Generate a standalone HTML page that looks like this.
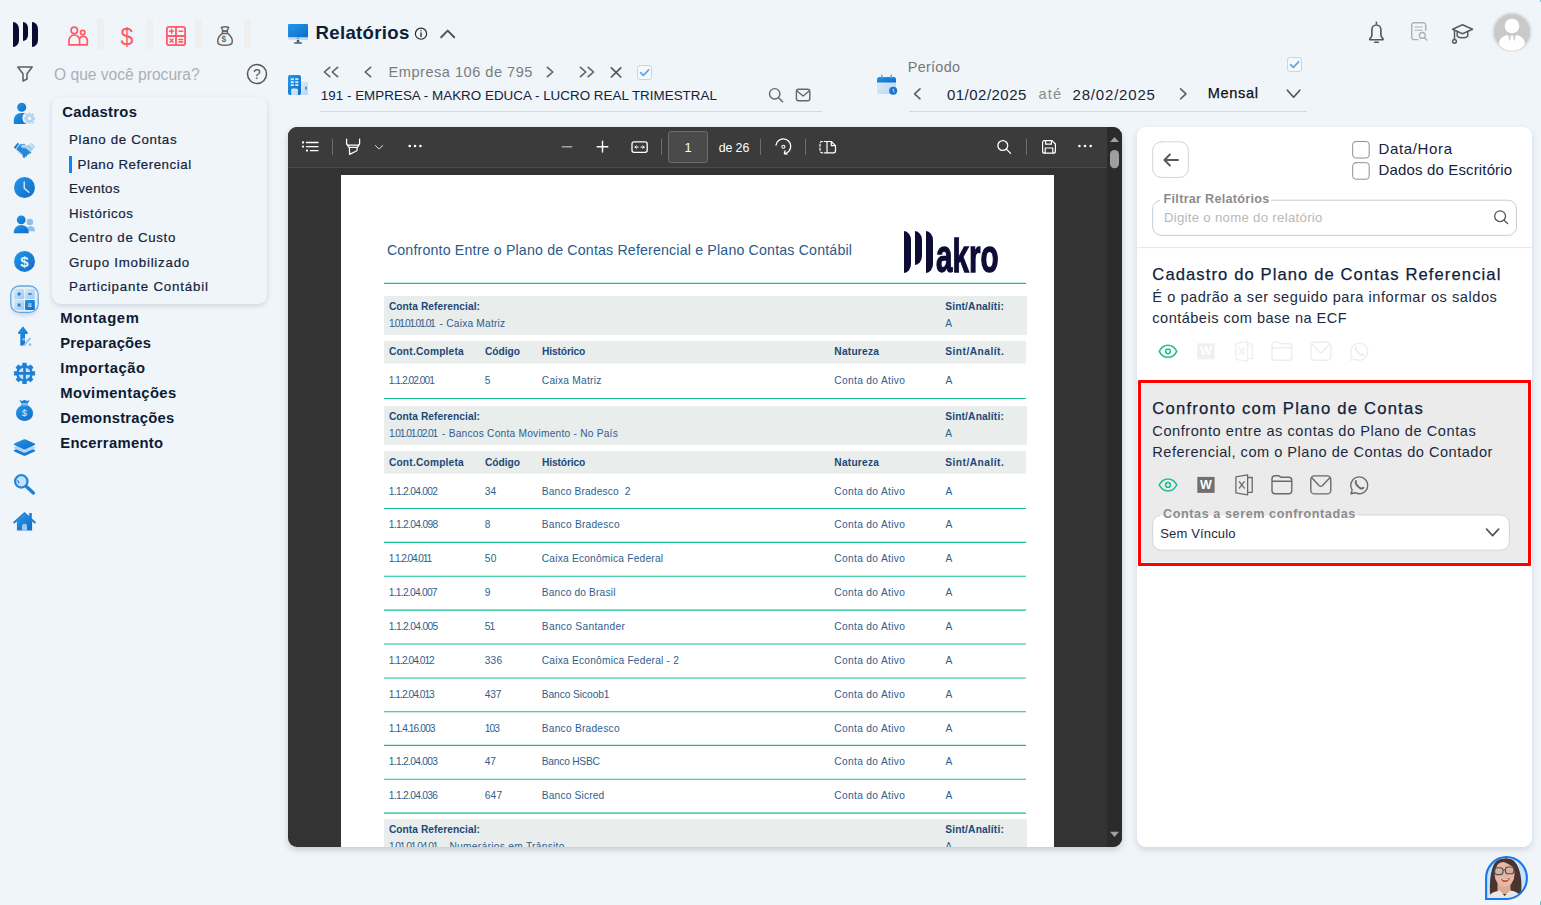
<!DOCTYPE html>
<html lang="pt-BR">
<head>
<meta charset="utf-8">
<title>Relatórios</title>
<style>
*{box-sizing:border-box;margin:0;padding:0}
html,body{width:1541px;height:905px;overflow:hidden}
body{background:#f0f5fa;font-family:"Liberation Sans",sans-serif;color:#10213a;position:relative}
.a{position:absolute;white-space:pre;line-height:1}
svg{position:absolute;overflow:visible}
/* top app icons */
.sep{position:absolute;top:19px;height:30px;width:7px;background:#efefef}
/* submenu card */
#card{position:absolute;left:52px;top:97px;width:215px;height:207px;border-radius:9px;background:#f0f5fa;box-shadow:0 2px 5px rgba(40,60,90,.17)}
/* pdf viewer */
#pdf{position:absolute;left:288px;top:127px;width:834px;height:720px;border-radius:9px;background:#333333;overflow:hidden;box-shadow:0 3px 6px rgba(50,60,75,.22)}
#tb{position:absolute;left:0;top:0;width:819px;height:41px;background:#3b3b3b;border-bottom:1px solid #4b4b4b}
#sb{position:absolute;left:819px;top:0;width:15px;height:720px;background:#2b2b2b}
#page{position:absolute;left:53px;top:48px;width:713px;height:700px;background:#fff;overflow:hidden}
/* right panel */
#rp{position:absolute;left:1137px;top:127px;width:395px;height:720px;border-radius:9px;background:#fff;box-shadow:0 3px 6px rgba(50,60,75,.16);overflow:hidden}
</style>
</head>
<body>

<!-- ============ TOP LEFT: LOGO + APP ICONS ============ -->
<div id="topleft">
  <!-- logo -->
  <div class="a" style="left:13px;top:22px;width:6px;height:25px;background:#0c0a33;border-radius:0 6px 6px 0/0 7px 7px 0"></div>
  <div class="a" style="left:22.5px;top:22px;width:5.8px;height:19px;background:#0c0a33;border-radius:0 6px 6px 0/0 7px 7px 0"></div>
  <div class="a" style="left:32px;top:22px;width:6.2px;height:25px;background:#0c0a33;border-radius:0 6px 6px 0/0 7px 7px 0"></div>
  <!-- people -->
  <svg style="left:66px;top:24px" width="24" height="24" viewBox="66 24 24 24" fill="none" stroke="#ff5a65" stroke-width="1.7" stroke-linejoin="round" stroke-linecap="round">
    <circle cx="74.3" cy="30.4" r="3.2"/>
    <path d="M69 44.9 V40.3 a5.3 5.3 0 0 1 10.6 0 V44.9 Z"/>
    <circle cx="82.7" cy="32.5" r="2.2"/>
    <path d="M79.6 38.2 a4.2 4.2 0 0 1 7.7 2.2 V44.9 H79.6"/>
  </svg>
  <div class="sep" style="left:97px"></div>
  <!-- dollar -->
  <div class="a" style="left:119.5px;top:25.5px;font-size:23px;color:#ff5a65;width:15px;text-align:center">$</div>
  <div class="sep" style="left:146px"></div>
  <!-- calculator -->
  <svg style="left:164px;top:24px" width="24" height="24" viewBox="164 24 24 24" fill="none" stroke="#ff5a65" stroke-width="1.8" stroke-linecap="round">
    <rect x="166.9" y="26.9" width="18.2" height="18.2" rx="2.2"/>
    <path d="M176 27 V45 M167 36 H185"/>
    <path d="M169.7 31.3 h3.8 M171.6 29.4 v3.8 M179 31.3 h3.6 M170.2 39.2 l2.8 2.8 M173 39.2 l-2.8 2.8 M179 39.5 h3.6 M179 41.9 h3.6" stroke-width="1.6"/>
  </svg>
  <div class="sep" style="left:195px"></div>
  <!-- money bag -->
  <svg style="left:214px;top:24px" width="24" height="24" viewBox="214 24 24 24" fill="none" stroke="#666" stroke-width="1.5" stroke-linejoin="round" stroke-linecap="round">
    <path d="M221.3 27.5 q3.8 -1.3 7.4 0 l-2 3.6 h-3.4 Z"/>
    <path d="M222.5 31.3 h5 v2.2 h-5 Z"/>
    <path d="M222.3 33.6 c-3 2 -4.6 5 -4.6 7.8 c0 3 2.5 3.9 7.3 3.9 s7.3 -.9 7.3 -3.9 c0 -2.8 -1.6 -5.8 -4.6 -7.8"/>
  </svg>
  <div class="a" style="left:221.6px;top:35.2px;font-size:8.5px;font-weight:bold;color:#666">$</div>
  <div class="sep" style="left:244px"></div>
  <!-- filter -->
  <svg style="left:15px;top:64px" width="20" height="20" viewBox="15 64 20 20" fill="none" stroke="#5a5f66" stroke-width="1.5" stroke-linejoin="round">
    <path d="M17.8 67 H32.2 L27 73.8 V79 L23 81 V73.8 Z"/>
  </svg>
  <div class="a" style="left:54px;top:66.8px;font-size:15.6px;color:#aab0b6">O que você procura?</div>
  <!-- help -->
  <svg style="left:246px;top:63px" width="22" height="22" viewBox="246 63 22 22" fill="none" stroke="#555" stroke-width="1.5">
    <circle cx="257" cy="74" r="9.5"/>
  </svg>
  <div class="a" style="left:252.5px;top:67px;font-size:14px;color:#555;width:9px;text-align:center">?</div>
</div>

<!-- ============ SIDEBAR ============ -->
<div id="sidebar">
<svg style="left:0;top:95px" width="50" height="445" viewBox="0 95 50 445">
<defs>
<linearGradient id="bg" x1="0" y1="0" x2="1" y2="1"><stop offset="0" stop-color="#2397ea"/><stop offset="1" stop-color="#0f6cc6"/></linearGradient>
<linearGradient id="lb" x1="0" y1="0" x2="1" y2="1"><stop offset="0" stop-color="#d5e8f8"/><stop offset="1" stop-color="#9fcaf0"/></linearGradient>
</defs>
<!-- 1 user gear -->
<circle cx="21.7" cy="107.3" r="4.5" fill="url(#bg)"/>
<path d="M13.8 124 v-4 a7 7 0 0 1 7 -7 h4.2 a6.3 6.3 0 0 0 1.6 11 Z" fill="url(#bg)"/>
<g fill="#b3d4f1"><circle cx="29.6" cy="118.4" r="4.4"/>
<path d="M28.6 112.8h2l.4 1.6h-2.8zM28.6 124h2l.4-1.6h-2.8zM24 117.4v2l1.6.4v-2.8zM35.2 117.4v2l-1.6.4v-2.8zM25 114.5l1.4-1.4 1.4.9-2 2zM34.2 114.5l-1.4-1.4-1.4.9 2 2zM25 122.3l1.4 1.4 1.4-.9-2-2zM34.2 122.3l-1.4 1.4-1.4-.9 2-2z"/></g>
<circle cx="29.6" cy="118.4" r="1.8" fill="#f0f5fa"/>
<!-- 2 handshake -->
<path d="M30.3 143.3 L31.8 143 L35.1 147.1 L33.7 148.4Z" fill="#a9cfeb"/>
<path d="M21.9 146.2 L29.7 144.6 L33.6 148.7 L31.8 150.9 L30.9 151.5 L26 148.1 L21.9 147.8Z" fill="#abd0ec"/>
<path d="M17.5 151.5 l2 2.2 M19.5 152.8 l2 2.2 M21.3 154.3 l1.5 1.7" stroke="#cfe3f4" stroke-width="1.1" fill="none"/>
<path d="M13.8 147.3 L17.7 142.8 L19.2 143.9 L15.5 148.9Z" fill="#1f7fd2"/>
<path d="M16.4 149.3 L20.1 144.4 L24.9 144.2 L24.9 144.8 L21.6 145.3 L21 146.8 L21.9 147.9 L25.6 148.2 L31.1 152.4 L30.3 153.6 L29.1 153 L28.6 154.6 L27.2 154.3 L26.6 156.4 L25.2 156.1 L24.7 157.7 L23.2 157.4 L22.6 154.6Z" fill="#2a86d6" stroke="#2a86d6" stroke-width=".4" stroke-linejoin="round"/>
<!-- 3 clock -->
<circle cx="24.5" cy="187.5" r="10.5" fill="url(#bg)"/>
<path d="M24.2 181.8 V188.3 L28.9 192.3" fill="none" stroke="#e6f1fb" stroke-width="1.3" stroke-linecap="round" stroke-linejoin="round"/>
<!-- 4 users -->
<circle cx="29.9" cy="221.9" r="3.2" fill="#8fc0ea"/>
<path d="M26.5 231.2 v-1 a4 4 0 0 1 8.3 0 v1z" fill="#8fc0ea"/>
<circle cx="21.2" cy="219.8" r="4.4" fill="url(#bg)"/>
<path d="M13.8 233.2 v-1.4 a7.4 6.8 0 0 1 14.9 0 v1.4z" fill="url(#bg)"/>
<!-- 5 dollar circle -->
<circle cx="24.5" cy="261.4" r="10.5" fill="url(#bg)"/>
<!-- 6 calc active tile -->
<ellipse cx="24.5" cy="309" rx="12" ry="5.5" fill="rgba(60,90,130,.28)" style="filter:blur(2.5px)"/>
<rect x="10.8" y="286" width="27.4" height="26.4" rx="8.5" fill="#e4effa" stroke="#5fa8e6" stroke-width="1.3"/>
<rect x="14.2" y="289" width="9.8" height="10" rx="1" fill="url(#lb)"/>
<rect x="25" y="289" width="9.8" height="10" rx="1" fill="url(#lb)"/>
<rect x="14.2" y="300" width="9.8" height="10" rx="1" fill="url(#lb)"/>
<rect x="25" y="300" width="9.8" height="10" rx="1" fill="url(#bg)"/>
<path d="M17.4 294h3.4M19.1 292.3v3.4M28.2 294h3.4M17.7 303.6l2.8 2.8M20.5 303.6l-2.8 2.8" stroke="#1a7ad2" stroke-width="1.3" fill="none"/>
<path d="M28.2 304h3.4M28.2 306.2h3.4" stroke="#e8f2fb" stroke-width="1.2" fill="none"/>
<!-- 7 arrow up percent -->
<path d="M22.9 326.3 L27.8 332.6 Q28.3 333.9 27 334 H25 V345.4 H20.3 V334 H18.8 Q17.5 333.9 18 332.6 Z" fill="url(#bg)"/>
<path d="M23.6 345.8 L30.4 338" stroke="#8fc1ec" stroke-width="1.9"/>
<circle cx="23.8" cy="339.3" r="1.4" fill="#8fc1ec"/><circle cx="30" cy="344.7" r="1.4" fill="#8fc1ec"/>
<!-- 8 gear crosshair -->
<g transform="translate(24.5 373.4)">
<g fill="#1c82da"><rect x="-2.2" y="-10.6" width="4.4" height="21.2" rx=".6"/><rect x="-2.2" y="-10.6" width="4.4" height="21.2" rx=".6" transform="rotate(45)"/><rect x="-2.2" y="-10.6" width="4.4" height="21.2" rx=".6" transform="rotate(90)"/><rect x="-2.2" y="-10.6" width="4.4" height="21.2" rx=".6" transform="rotate(135)"/></g>
<circle r="8.3" fill="#1c82da"/><circle r="6" fill="#c9e0f6"/>
<path d="M0 -6.5V6.5M-6.5 0H6.5" stroke="#1c7cd3" stroke-width="2.6"/>
</g>
<!-- 9 money bag -->
<path d="M19.4 400 l2.6 1 2.5-1.2 2.5 1.2 2.6-1 -1.9 3.6 h-6.4z" fill="#1c82da"/>
<rect x="21" y="403.4" width="7" height="2.2" fill="#7fb7e8"/>
<path d="M21 405.5 h7 c3.5 2 5 4.8 5 7.8 c0 4.6 -3.8 7.6 -8.5 7.6 s-8.5 -3 -8.5 -7.6 c0 -3 1.5 -5.8 5 -7.8z" fill="url(#bg)"/>
<!-- 10 layers -->
<path d="M23.2 446.3 Q24.5 445.8 25.8 446.3 L34.6 450 Q36 450.8 34.6 451.6 L25.8 455.5 Q24.5 456 23.2 455.5 L14.4 451.6 Q13 450.8 14.4 450 Z" fill="#1779d2"/>
<path d="M23.2 443.3 Q24.5 442.8 25.8 443.3 L34.6 447 Q36 447.8 34.6 448.6 L25.8 452.4 Q24.5 452.9 23.2 452.4 L14.4 448.6 Q13 447.8 14.4 447 Z" fill="#b4d4f2"/>
<path d="M23.2 439.5 Q24.5 439 25.8 439.5 L34.6 443.4 Q36 444.2 34.6 445 L25.8 449 Q24.5 449.5 23.2 449 L14.4 445 Q13 444.2 14.4 443.4 Z" fill="url(#bg)"/>
<!-- 11 magnifier -->
<circle cx="21.3" cy="481.4" r="6.2" fill="#c9e0f6" stroke="#1f87dd" stroke-width="2.3"/>
<path d="M26.6 486.8 L33.4 492.9" stroke="#1c7fd6" stroke-width="3.4" stroke-linecap="round"/>
<path d="M17.8 480.2 q.2 2 1.5 3" stroke="#1c7fd6" stroke-width="1.2" fill="none"/>
<!-- 12 home -->
<rect x="29.2" y="513" width="2.6" height="7" fill="#1c7fd6"/>
<path d="M16.9 521 L24.5 514.6 L32.1 521 V530.4 H16.9Z" fill="url(#bg)"/>
<path d="M13.6 523 L24.5 513.3 L35.4 523" fill="none" stroke="#1c7fd6" stroke-width="2" stroke-linejoin="miter"/>
<path d="M22 530.4 v-4.2 a2.5 2.5 0 0 1 5 0 v4.2z" fill="#9dc8ee"/>
</svg>
<div class="a" style="left:19.3px;top:254px;font-size:15px;font-weight:bold;color:#e8f2fc;width:10.4px;text-align:center">$</div>
<div class="a" style="left:21.5px;top:408.3px;font-size:9.5px;color:#dcebf9;width:6px;text-align:center">$</div>
<div id="card"></div>
<div class="a" style="left:62.3px;top:104.5px;font-size:14.8px;color:#0d1b33;letter-spacing:0.28px;font-weight:bold;">Cadastros</div>
<div class="a" style="left:69px;top:132.9px;font-size:13.3px;color:#15233b;letter-spacing:0.66px;-webkit-text-stroke:.2px #15233b;">Plano de Contas</div>
<div class="a" style="left:77.5px;top:157.7px;font-size:13.3px;color:#15233b;letter-spacing:0.54px;-webkit-text-stroke:.2px #15233b;">Plano Referencial</div>
<div class="a" style="left:69px;top:181.9px;font-size:13.3px;color:#15233b;letter-spacing:0.42px;-webkit-text-stroke:.2px #15233b;">Eventos</div>
<div class="a" style="left:69px;top:206.7px;font-size:13.3px;color:#15233b;letter-spacing:0.62px;-webkit-text-stroke:.2px #15233b;">Históricos</div>
<div class="a" style="left:69px;top:231px;font-size:13.3px;color:#15233b;letter-spacing:0.68px;-webkit-text-stroke:.2px #15233b;">Centro de Custo</div>
<div class="a" style="left:69px;top:255.8px;font-size:13.3px;color:#15233b;letter-spacing:0.77px;-webkit-text-stroke:.2px #15233b;">Grupo Imobilizado</div>
<div class="a" style="left:69px;top:280px;font-size:13.3px;color:#15233b;letter-spacing:0.81px;-webkit-text-stroke:.2px #15233b;">Participante Contábil</div>
<div class="a" style="left:69px;top:156px;width:3px;height:17px;background:#0a84ff"></div>
<div class="a" style="left:60.3px;top:310.5px;font-size:14.8px;color:#0d1b33;letter-spacing:0.66px;font-weight:bold;">Montagem</div>
<div class="a" style="left:60.3px;top:335.5px;font-size:14.8px;color:#0d1b33;letter-spacing:0.18px;font-weight:bold;">Preparações</div>
<div class="a" style="left:60.3px;top:360.5px;font-size:14.8px;color:#0d1b33;letter-spacing:0.55px;font-weight:bold;">Importação</div>
<div class="a" style="left:60.3px;top:385.8px;font-size:14.8px;color:#0d1b33;letter-spacing:0.41px;font-weight:bold;">Movimentações</div>
<div class="a" style="left:60.3px;top:410.7px;font-size:14.8px;color:#0d1b33;letter-spacing:0.25px;font-weight:bold;">Demonstrações</div>
<div class="a" style="left:60.3px;top:435.5px;font-size:14.8px;color:#0d1b33;letter-spacing:0.29px;font-weight:bold;">Encerramento</div>
</div>

<!-- ============ HEADER ============ -->
<div id="header">
<svg style="left:280px;top:0" width="1261" height="125" viewBox="280 0 1261 125">
<defs>
<linearGradient id="hg" x1="0" y1="0" x2="1" y2="1"><stop offset="0" stop-color="#2397ea"/><stop offset="1" stop-color="#0f6cc6"/></linearGradient>
<linearGradient id="hl" x1="0" y1="0" x2="1" y2="1"><stop offset="0" stop-color="#e2eefa"/><stop offset="1" stop-color="#b7d5f1"/></linearGradient>
</defs>
<!-- monitor -->
<rect x="288" y="24" width="20" height="16" rx="1" fill="url(#hl)"/>
<rect x="288" y="24" width="20" height="13.2" rx="1" fill="url(#hg)"/>
<rect x="297" y="37.9" width="2" height="1" fill="#2a8be0"/>
<rect x="296.8" y="40" width="2.5" height="2.6" fill="#3d6266"/>
<rect x="294" y="42.2" width="8" height="1.6" rx=".8" fill="#3d6266"/>
<!-- building -->
<rect x="299" y="81.5" width="9" height="13.5" rx="1.5" fill="url(#hl)"/>
<rect x="305" y="86.7" width="1.8" height="2.9" fill="#3f95e2"/>
<rect x="288" y="75" width="13" height="20" rx="2" fill="url(#hg)"/>
<g fill="#d9e9f8"><rect x="290.7" y="78.3" width="3.2" height="1.8"/><rect x="295.2" y="78.3" width="3.2" height="1.8"/><rect x="290.7" y="81.3" width="3.2" height="1.8"/><rect x="295.2" y="81.3" width="3.2" height="1.8"/><rect x="290.7" y="84.2" width="3.2" height="1.8"/><rect x="295.2" y="84.2" width="3.2" height="1.8"/></g>
<path d="M291.2 95 v-5 a1.5 1.5 0 0 1 1.5 -1.5 h3.8 a1.5 1.5 0 0 1 1.5 1.5 v5z" fill="url(#hl)"/>
<circle cx="421" cy="33.7" r="5.6" fill="none" stroke="#222" stroke-width="1.1"/>
<path d="M421 32.8 v3.8 M421 30.6 v.2" stroke="#222" stroke-width="1.3" stroke-linecap="round"/>
<path d="M441.2 37.2 L447.7 30.6 L454.2 37.2" fill="none" stroke="#555" stroke-width="2" stroke-linecap="round" stroke-linejoin="round"/>
<path d="M329.79999999999995 67.3 L324.4 72 L329.79999999999995 76.7" fill="none" stroke="#606060" stroke-width="1.6" stroke-linecap="round" stroke-linejoin="round"/><path d="M337.59999999999997 67.3 L332.2 72 L337.59999999999997 76.7" fill="none" stroke="#606060" stroke-width="1.6" stroke-linecap="round" stroke-linejoin="round"/><path d="M370.59999999999997 67.3 L365.2 72 L370.59999999999997 76.7" fill="none" stroke="#606060" stroke-width="1.6" stroke-linecap="round" stroke-linejoin="round"/>
<path d="M547.4 67.3 L552.8 72 L547.4 76.7" fill="none" stroke="#606060" stroke-width="1.6" stroke-linecap="round" stroke-linejoin="round"/><path d="M580.4 67.3 L585.8 72 L580.4 76.7" fill="none" stroke="#606060" stroke-width="1.6" stroke-linecap="round" stroke-linejoin="round"/><path d="M588.2 67.3 L593.6 72 L588.2 76.7" fill="none" stroke="#606060" stroke-width="1.6" stroke-linecap="round" stroke-linejoin="round"/>
<path d="M611.4 67.8 L620.8 77 M620.8 67.8 L611.4 77" stroke="#555" stroke-width="1.7" stroke-linecap="round"/>
<circle cx="774.7" cy="93.8" r="5.2" fill="none" stroke="#666" stroke-width="1.4"/><path d="M778.5 97.7 L782.6 101.8" stroke="#666" stroke-width="1.5" stroke-linecap="round"/>
<rect x="796.4" y="89.3" width="13.4" height="11.4" rx="2.2" fill="none" stroke="#666" stroke-width="1.4"/><path d="M797 91 L803.1 96 L809.2 91" fill="none" stroke="#666" stroke-width="1.4" stroke-linejoin="round"/>
<path d="M320 111.5 H822" stroke="#d3d8de" stroke-width="1"/>
<path d="M909 111.5 H1307" stroke="#d3d8de" stroke-width="1"/>
<path d="M920 88.8 L914.6 93.8 L920 98.8" fill="none" stroke="#606060" stroke-width="1.6" stroke-linecap="round" stroke-linejoin="round"/><path d="M1180.6 88.8 L1186 93.8 L1180.6 98.8" fill="none" stroke="#606060" stroke-width="1.6" stroke-linecap="round" stroke-linejoin="round"/><path d="M1287.4 90.2 L1293.6000000000001 97.2 L1299.8000000000002 90.2" fill="none" stroke="#555" stroke-width="1.7" stroke-linecap="round" stroke-linejoin="round"/>
<rect x="877" y="77" width="19" height="17" rx="2.5" fill="url(#hl)"/>
<path d="M877 82.5 v-3 a2.5 2.5 0 0 1 2.5 -2.5 h14 a2.5 2.5 0 0 1 2.5 2.5 v3z" fill="url(#hg)"/>
<rect x="881" y="74.5" width="1.5" height="4" rx=".7" fill="#5aa9ea"/><rect x="890.5" y="74.5" width="1.5" height="4" rx=".7" fill="#5aa9ea"/>
<circle cx="893.2" cy="90.8" r="4" fill="#1877d3"/><path d="M893.2 88.8 v2.2 l1.5 1" stroke="#e6f1fb" stroke-width=".9" fill="none"/>
</svg>
<div class="a" style="left:315.5px;top:24.2px;font-size:18.6px;color:#0f1d36;letter-spacing:0.32px;font-weight:bold;">Relatórios</div>
<div class="a" style="left:388.6px;top:64.5px;font-size:14.6px;color:#7c7c7c;letter-spacing:0.49px;">Empresa 106 de 795</div>
<div class="a" style="left:320.8px;top:88.7px;font-size:13.4px;color:#15213a;letter-spacing:0.02px;">191 - EMPRESA - MAKRO EDUCA - LUCRO REAL TRIMESTRAL</div>
<div class="a" style="left:637px;top:65px;width:15px;height:15px;border:1px solid #cfd4da;border-radius:3px;background:#f6f9fc"></div><svg style="left:637px;top:65px" width="15" height="15" viewBox="0 0 15 15"><path d="M3.6 7.6 L6.4 10.3 L11.6 4.8" fill="none" stroke="#5ea9ea" stroke-width="1.8" stroke-linecap="round" stroke-linejoin="round"/></svg>
<div class="a" style="left:907.8px;top:60.3px;font-size:14.4px;color:#777;letter-spacing:0.29px;">Período</div>
<div class="a" style="left:947px;top:86.6px;font-size:15px;color:#1a2433;letter-spacing:0.47px;">01/02/2025</div>
<div class="a" style="left:1038.5px;top:86.9px;font-size:14.6px;color:#8a8a8a;letter-spacing:1.2px;">até</div>
<div class="a" style="left:1072.5px;top:86.6px;font-size:15px;color:#1a2433;letter-spacing:0.82px;">28/02/2025</div>
<div class="a" style="left:1207.8px;top:86.4px;font-size:14.6px;color:#111;letter-spacing:0.63px;-webkit-text-stroke:.25px #111;">Mensal</div>
<div class="a" style="left:1286.5px;top:57px;width:15px;height:15px;border:1px solid #cfd4da;border-radius:3px;background:#f6f9fc"></div><svg style="left:1286.5px;top:57px" width="15" height="15" viewBox="0 0 15 15"><path d="M3.6 7.6 L6.4 10.3 L11.6 4.8" fill="none" stroke="#5ea9ea" stroke-width="1.8" stroke-linecap="round" stroke-linejoin="round"/></svg>
<svg style="left:1360px;top:8px" width="181" height="50" viewBox="1360 8 181 50" fill="none" stroke-linecap="round" stroke-linejoin="round">
<g stroke="#555" stroke-width="1.6">
<path d="M1376.4 22.3 v1.2 M1370 38.5 c1.5 -1 1.9 -2 1.9 -3.5 v-5.5 a4.5 4.5 0 0 1 9 0 v5.5 c0 1.5 .4 2.5 1.9 3.5 c.6 .6 .3 1.2 -.5 1.2 h-11.8 c-.8 0 -1.1 -.6 -.5 -1.2z M1374.6 42.3 h3.6"/>
</g>
<g stroke="#b0b0b0" stroke-width="1.4">
<path d="M1418 39.6 h-4 a2.3 2.3 0 0 1 -2.3 -2.3 v-12.3 a2.3 2.3 0 0 1 2.3 -2.3 h9.4 a2.3 2.3 0 0 1 2.3 2.3 v5.4"/>
<path d="M1415 27 h7 M1415 30.2 h7" stroke-width="1.1"/>
<circle cx="1422.3" cy="35.4" r="2.9"/><path d="M1424.5 37.7 l2.3 2.3"/>
</g>
<g stroke="#5c5c5c" stroke-width="1.5">
<path d="M1452.6 29.3 L1462.5 24.7 L1472.5 29.3 L1462.5 33.8 Z"/>
<path d="M1457.2 31.6 v4.3 c1.5 2.6 9 2.6 10.6 0 v-4.3"/>
<path d="M1454.5 30.2 v9"/><circle cx="1454.5" cy="41.3" r="1.9"/>
</g>
<circle cx="1512" cy="32" r="19" fill="#c9c9c9" stroke="#e2e2e2" stroke-width="2"/>
<circle cx="1512" cy="26" r="7.3" fill="#fff" stroke="none"/>
<path d="M1499 44 c0 -6 5 -8.5 9 -9 l1.7 6.5 1.1-4.2 -.8-1.6 h4 l-.8 1.6 1.1 4.2 1.7-6.5 c4 .5 9 3 9 9 c-3 4.5 -8 6.5 -13 6.5 s-10 -2 -13 -6.5z" fill="#fff" stroke="none"/>
</svg>
</div>

<!-- ============ PDF VIEWER ============ -->
<div id="pdf">
  <div id="tb">
<svg style="left:0;top:0" width="819" height="41" viewBox="288 127 819 41" fill="none" stroke="#fff" stroke-width="1.3" stroke-linecap="round" stroke-linejoin="round">
<g fill="#fff" stroke="none"><circle cx="303" cy="142.5" r="1.15"/><circle cx="303" cy="146.6" r="1.15"/><circle cx="307" cy="150.6" r="1.15"/></g>
<path d="M306.4 142.5 H318 M306.4 146.6 H318 M310.3 150.6 H318"/>
<path d="M332.5 139.2 V154.6" stroke="#6e6e6e" stroke-width="1"/><path d="M661.5 139.2 V154.6" stroke="#6e6e6e" stroke-width="1"/><path d="M760.5 139.2 V154.6" stroke="#6e6e6e" stroke-width="1"/><path d="M805.5 139.2 V154.6" stroke="#6e6e6e" stroke-width="1"/><path d="M1026.5 139.2 V154.6" stroke="#6e6e6e" stroke-width="1"/>
<path d="M346.6 139.2 V143.6 a1.6 1.6 0 0 0 1.6 1.6 H358 a1.6 1.6 0 0 0 1.6 -1.6 V139.2"/><path d="M347.8 145.2 q.2 1.9 1.6 2.1 H357 q1.4 -.2 1.6 -2.1"/><path d="M349.4 147.4 L349.6 154.3 L356.4 151 Q357.1 150.6 357.1 149.8 V147.4"/>
<path d="M375.4 145.5 L379.1 149 L382.8 145.5" stroke-width="1" stroke="#ddd"/>
<g fill="#fff" stroke="none"><circle cx="409.7" cy="146" r="1.3"/><circle cx="415" cy="146" r="1.3"/><circle cx="420.4" cy="146" r="1.3"/><circle cx="1079.4" cy="146" r="1.3"/><circle cx="1085" cy="146" r="1.3"/><circle cx="1090.7" cy="146" r="1.3"/></g>
<path d="M562.4 146.8 H571.6" stroke="#a5a5a5" stroke-width="1.5"/><path d="M597.2 146.7 H607.8 M602.5 141.3 V152.1" stroke-width="1.4"/>
<rect x="632" y="141.9" width="15.2" height="10.4" rx="2" stroke-width="1.3"/><path d="M635 147.1 H638.2 M641 147.1 H644.2 M636.3 145.8 L635 147.1 L636.3 148.4 M642.9 145.8 L644.2 147.1 L642.9 148.4" stroke-width="1"/>
<rect x="668.5" y="131.5" width="39" height="31" rx="2.5" fill="#4a4a4a" stroke="#6c6c6c" stroke-width="1"/>
<path d="M776 145.2 a7.4 7.4 0 1 1 8.6 8.4"/><path d="M787 154.2 L784.3 153.7 L785 151"/><circle cx="783.4" cy="146.7" r="1.5" stroke-width="1.1"/>
<path d="M826.5 141.5 H822 a2 2 0 0 0 -2 2 V150.8 a2 2 0 0 0 2 2 H826.5" stroke-dasharray="2.2 1.8" stroke-width="1.2"/><path d="M827 141.5 H831.3 L835.5 145.7 V150.8 a2 2 0 0 1 -2 2 H827 Z M831.3 141.5 V145.7 H835.5" stroke-width="1.2"/>
<circle cx="1002.8" cy="145.5" r="4.9" stroke-width="1.3"/><path d="M1006.3 149.1 L1010.6 153.4" stroke-width="1.3"/>
<path d="M1042.6 142.6 a2 2 0 0 1 2 -2 H1052 L1055.4 144 V151.2 a2 2 0 0 1 -2 2 H1044.6 a2 2 0 0 1 -2 -2 Z" stroke-width="1.2"/><path d="M1045.6 140.8 V144.2 H1051.4 V140.8 M1045.2 153 V148 H1052.8 V153" stroke-width="1.2"/>
</svg>
<div class="a" style="left:380.5px;top:15.3px;width:39px;text-align:center;font-size:12.8px;color:#fff">1</div>
<div class="a" style="left:430.7px;top:15.3px;font-size:12.4px;color:#fff;letter-spacing:-.1px">de 26</div>
</div>
  <div id="page">
<div class="a" style="left:45.9px;top:68.0px;font-size:14.20px;color:#2a5a8a;letter-spacing:0.17px;">Confronto Entre o Plano de Contas Referencial e Plano Contas Contábil</div>
<div class="a" style="left:563px;top:56px;width:7px;height:41.7px;background:#0e0c35;border-radius:0 7px 7px 0/0 9px 9px 0"></div>
<div class="a" style="left:574px;top:56px;width:7px;height:33.7px;background:#0e0c35;border-radius:0 7px 7px 0/0 9px 9px 0"></div>
<div class="a" style="left:585.4px;top:56px;width:7px;height:41.7px;background:#0e0c35;border-radius:0 7px 7px 0/0 9px 9px 0"></div>
<div class="a" style="left:594.5px;top:57.2px;font-size:47px;font-weight:bold;color:#0e0c35;transform-origin:0 0;transform:scaleX(.63);-webkit-text-stroke:1.3px #0e0c35;letter-spacing:0">akro</div>
<svg style="left:43px;top:106px" width="642" height="5"><path d="M0 2.40 H642" stroke="#12c191" stroke-width="1.1"/></svg>
<svg style="left:43px;top:121px" width="643" height="40"><rect x="0" y="0.00" width="643" height="38.80" fill="#e9edeb"/></svg>
<div class="a" style="left:47.9px;top:127.1px;font-size:10.20px;color:#1c4877;letter-spacing:0.06px;font-weight:bold;">Conta Referencial:</div>
<div class="a" style="left:604.2px;top:127.1px;font-size:10.20px;color:#1c4877;letter-spacing:0.17px;font-weight:bold;">Sint/Analíti:</div>
<div class="a" style="left:47.9px;top:144.2px;font-size:10.20px;color:#2f5e8e;letter-spacing:-1.29px;">1.01.01.01.01</div>
<div class="a" style="left:98.6px;top:144.2px;font-size:10.20px;color:#2f5e8e;letter-spacing:0.21px;">- Caixa Matriz</div>
<div class="a" style="left:604.2px;top:144.2px;font-size:10.20px;color:#2f5e8e;">A</div>
<svg style="left:43px;top:165px" width="642" height="25"><rect x="0" y="0.90" width="642" height="22.60" fill="#e9edeb"/></svg>
<div class="a" style="left:47.9px;top:172.4px;font-size:10.20px;color:#1c4877;letter-spacing:0.20px;font-weight:bold;">Cont.Completa</div>
<div class="a" style="left:143.9px;top:172.4px;font-size:10.20px;color:#1c4877;letter-spacing:0.02px;font-weight:bold;">Código</div>
<div class="a" style="left:201.0px;top:172.4px;font-size:10.20px;color:#1c4877;letter-spacing:-0.11px;font-weight:bold;">Histórico</div>
<div class="a" style="left:493.3px;top:172.4px;font-size:10.20px;color:#1c4877;letter-spacing:0.23px;font-weight:bold;">Natureza</div>
<div class="a" style="left:604.2px;top:172.4px;font-size:10.20px;color:#1c4877;letter-spacing:0.49px;font-weight:bold;">Sint/Analít.</div>
<div class="a" style="left:47.8px;top:201.2px;font-size:10.20px;color:#2f5e8e;letter-spacing:-0.96px;">1.1.2.02.001</div>
<div class="a" style="left:143.8px;top:201.2px;font-size:10.20px;color:#2f5e8e;">5</div>
<div class="a" style="left:200.8px;top:201.2px;font-size:10.20px;color:#2f5e8e;letter-spacing:0.27px;">Caixa Matriz</div>
<div class="a" style="left:493.3px;top:201.2px;font-size:10.20px;color:#2f5e8e;letter-spacing:0.33px;">Conta do Ativo</div>
<div class="a" style="left:604.5px;top:201.2px;font-size:10.20px;color:#2f5e8e;">A</div>
<svg style="left:43px;top:221px" width="642" height="5"><path d="M0 2.50 H642" stroke="#12c191" stroke-width="1.1"/></svg>
<svg style="left:43px;top:231px" width="643" height="40"><rect x="0" y="0.10" width="643" height="38.80" fill="#e9edeb"/></svg>
<div class="a" style="left:47.9px;top:237.2px;font-size:10.20px;color:#1c4877;letter-spacing:0.06px;font-weight:bold;">Conta Referencial:</div>
<div class="a" style="left:604.2px;top:237.2px;font-size:10.20px;color:#1c4877;letter-spacing:0.17px;font-weight:bold;">Sint/Analíti:</div>
<div class="a" style="left:47.9px;top:254.3px;font-size:10.20px;color:#2f5e8e;letter-spacing:-1.08px;">1.01.01.02.01</div>
<div class="a" style="left:101.0px;top:254.3px;font-size:10.20px;color:#2f5e8e;letter-spacing:0.23px;">- Bancos Conta Movimento - No País</div>
<div class="a" style="left:604.2px;top:254.3px;font-size:10.20px;color:#2f5e8e;">A</div>
<svg style="left:43px;top:276px" width="642" height="24"><rect x="0" y="0.00" width="642" height="22.60" fill="#e9edeb"/></svg>
<div class="a" style="left:47.9px;top:282.5px;font-size:10.20px;color:#1c4877;letter-spacing:0.20px;font-weight:bold;">Cont.Completa</div>
<div class="a" style="left:143.9px;top:282.5px;font-size:10.20px;color:#1c4877;letter-spacing:0.02px;font-weight:bold;">Código</div>
<div class="a" style="left:201.0px;top:282.5px;font-size:10.20px;color:#1c4877;letter-spacing:-0.11px;font-weight:bold;">Histórico</div>
<div class="a" style="left:493.3px;top:282.5px;font-size:10.20px;color:#1c4877;letter-spacing:0.23px;font-weight:bold;">Natureza</div>
<div class="a" style="left:604.2px;top:282.5px;font-size:10.20px;color:#1c4877;letter-spacing:0.49px;font-weight:bold;">Sint/Analít.</div>
<div class="a" style="left:47.8px;top:311.6px;font-size:10.20px;color:#2f5e8e;letter-spacing:-0.68px;">1.1.2.04.002</div>
<div class="a" style="left:143.8px;top:311.6px;font-size:10.20px;color:#2f5e8e;letter-spacing:0.05px;">34</div>
<div class="a" style="left:200.8px;top:311.6px;font-size:10.20px;color:#2f5e8e;letter-spacing:0.16px;">Banco Bradesco  2</div>
<div class="a" style="left:493.3px;top:311.6px;font-size:10.20px;color:#2f5e8e;letter-spacing:0.33px;">Conta do Ativo</div>
<div class="a" style="left:604.5px;top:311.6px;font-size:10.20px;color:#2f5e8e;">A</div>
<svg style="left:43px;top:331px" width="642" height="5"><path d="M0 2.50 H642" stroke="#12c191" stroke-width="1.1"/></svg>
<div class="a" style="left:47.8px;top:345.4px;font-size:10.20px;color:#2f5e8e;letter-spacing:-0.67px;">1.1.2.04.098</div>
<div class="a" style="left:143.8px;top:345.4px;font-size:10.20px;color:#2f5e8e;">8</div>
<div class="a" style="left:200.8px;top:345.4px;font-size:10.20px;color:#2f5e8e;letter-spacing:0.23px;">Banco Bradesco</div>
<div class="a" style="left:493.3px;top:345.4px;font-size:10.20px;color:#2f5e8e;letter-spacing:0.33px;">Conta do Ativo</div>
<div class="a" style="left:604.5px;top:345.4px;font-size:10.20px;color:#2f5e8e;">A</div>
<svg style="left:43px;top:365px" width="642" height="5"><path d="M0 2.40 H642" stroke="#12c191" stroke-width="1.1"/></svg>
<div class="a" style="left:47.8px;top:379.3px;font-size:10.20px;color:#2f5e8e;letter-spacing:-1.13px;">1.1.2.04.011</div>
<div class="a" style="left:143.8px;top:379.3px;font-size:10.20px;color:#2f5e8e;letter-spacing:0.35px;">50</div>
<div class="a" style="left:200.8px;top:379.3px;font-size:10.20px;color:#2f5e8e;letter-spacing:0.21px;">Caixa Econômica Federal</div>
<div class="a" style="left:493.3px;top:379.3px;font-size:10.20px;color:#2f5e8e;letter-spacing:0.33px;">Conta do Ativo</div>
<div class="a" style="left:604.5px;top:379.3px;font-size:10.20px;color:#2f5e8e;">A</div>
<svg style="left:43px;top:399px" width="642" height="5"><path d="M0 2.30 H642" stroke="#12c191" stroke-width="1.1"/></svg>
<div class="a" style="left:47.8px;top:413.1px;font-size:10.20px;color:#2f5e8e;letter-spacing:-0.72px;">1.1.2.04.007</div>
<div class="a" style="left:143.8px;top:413.1px;font-size:10.20px;color:#2f5e8e;">9</div>
<div class="a" style="left:200.8px;top:413.1px;font-size:10.20px;color:#2f5e8e;letter-spacing:0.16px;">Banco do Brasil</div>
<div class="a" style="left:493.3px;top:413.1px;font-size:10.20px;color:#2f5e8e;letter-spacing:0.33px;">Conta do Ativo</div>
<div class="a" style="left:604.5px;top:413.1px;font-size:10.20px;color:#2f5e8e;">A</div>
<svg style="left:43px;top:433px" width="642" height="5"><path d="M0 2.10 H642" stroke="#12c191" stroke-width="1.1"/></svg>
<div class="a" style="left:47.8px;top:447.0px;font-size:10.20px;color:#2f5e8e;letter-spacing:-0.67px;">1.1.2.04.005</div>
<div class="a" style="left:143.8px;top:447.0px;font-size:10.20px;color:#2f5e8e;letter-spacing:-0.90px;">51</div>
<div class="a" style="left:200.8px;top:447.0px;font-size:10.20px;color:#2f5e8e;letter-spacing:0.31px;">Banco Santander</div>
<div class="a" style="left:493.3px;top:447.0px;font-size:10.20px;color:#2f5e8e;letter-spacing:0.33px;">Conta do Ativo</div>
<div class="a" style="left:604.5px;top:447.0px;font-size:10.20px;color:#2f5e8e;">A</div>
<svg style="left:43px;top:467px" width="642" height="5"><path d="M0 2.00 H642" stroke="#12c191" stroke-width="1.1"/></svg>
<div class="a" style="left:47.8px;top:480.8px;font-size:10.20px;color:#2f5e8e;letter-spacing:-0.97px;">1.1.2.04.012</div>
<div class="a" style="left:143.8px;top:480.8px;font-size:10.20px;color:#2f5e8e;letter-spacing:0.14px;">336</div>
<div class="a" style="left:200.8px;top:480.8px;font-size:10.20px;color:#2f5e8e;letter-spacing:0.22px;">Caixa Econômica Federal - 2</div>
<div class="a" style="left:493.3px;top:480.8px;font-size:10.20px;color:#2f5e8e;letter-spacing:0.33px;">Conta do Ativo</div>
<div class="a" style="left:604.5px;top:480.8px;font-size:10.20px;color:#2f5e8e;">A</div>
<svg style="left:43px;top:501px" width="642" height="5"><path d="M0 2.00 H642" stroke="#12c191" stroke-width="1.1"/></svg>
<div class="a" style="left:47.8px;top:514.7px;font-size:10.20px;color:#2f5e8e;letter-spacing:-0.97px;">1.1.2.04.013</div>
<div class="a" style="left:143.8px;top:514.7px;font-size:10.20px;color:#2f5e8e;letter-spacing:-0.16px;">437</div>
<div class="a" style="left:200.8px;top:514.7px;font-size:10.20px;color:#2f5e8e;letter-spacing:-0.07px;">Banco Sicoob1</div>
<div class="a" style="left:493.3px;top:514.7px;font-size:10.20px;color:#2f5e8e;letter-spacing:0.33px;">Conta do Ativo</div>
<div class="a" style="left:604.5px;top:514.7px;font-size:10.20px;color:#2f5e8e;">A</div>
<svg style="left:43px;top:534px" width="642" height="5"><path d="M0 2.70 H642" stroke="#12c191" stroke-width="1.1"/></svg>
<div class="a" style="left:47.8px;top:548.5px;font-size:10.20px;color:#2f5e8e;letter-spacing:-0.91px;">1.1.4.16.003</div>
<div class="a" style="left:143.8px;top:548.5px;font-size:10.20px;color:#2f5e8e;letter-spacing:-0.90px;">103</div>
<div class="a" style="left:200.8px;top:548.5px;font-size:10.20px;color:#2f5e8e;letter-spacing:0.23px;">Banco Bradesco</div>
<div class="a" style="left:493.3px;top:548.5px;font-size:10.20px;color:#2f5e8e;letter-spacing:0.33px;">Conta do Ativo</div>
<div class="a" style="left:604.5px;top:548.5px;font-size:10.20px;color:#2f5e8e;">A</div>
<svg style="left:43px;top:568px" width="642" height="5"><path d="M0 2.40 H642" stroke="#12c191" stroke-width="1.1"/></svg>
<div class="a" style="left:47.8px;top:582.4px;font-size:10.20px;color:#2f5e8e;letter-spacing:-0.68px;">1.1.2.04.003</div>
<div class="a" style="left:143.8px;top:582.4px;font-size:10.20px;color:#2f5e8e;letter-spacing:-0.25px;">47</div>
<div class="a" style="left:200.8px;top:582.4px;font-size:10.20px;color:#2f5e8e;letter-spacing:-0.22px;">Banco HSBC</div>
<div class="a" style="left:493.3px;top:582.4px;font-size:10.20px;color:#2f5e8e;letter-spacing:0.33px;">Conta do Ativo</div>
<div class="a" style="left:604.5px;top:582.4px;font-size:10.20px;color:#2f5e8e;">A</div>
<svg style="left:43px;top:602px" width="642" height="5"><path d="M0 2.30 H642" stroke="#12c191" stroke-width="1.1"/></svg>
<div class="a" style="left:47.8px;top:616.2px;font-size:10.20px;color:#2f5e8e;letter-spacing:-0.68px;">1.1.2.04.036</div>
<div class="a" style="left:143.8px;top:616.2px;font-size:10.20px;color:#2f5e8e;letter-spacing:0.14px;">647</div>
<div class="a" style="left:200.8px;top:616.2px;font-size:10.20px;color:#2f5e8e;letter-spacing:0.17px;">Banco Sicred</div>
<div class="a" style="left:493.3px;top:616.2px;font-size:10.20px;color:#2f5e8e;letter-spacing:0.33px;">Conta do Ativo</div>
<div class="a" style="left:604.5px;top:616.2px;font-size:10.20px;color:#2f5e8e;">A</div>
<svg style="left:43px;top:636px" width="642" height="5"><path d="M0 2.10 H642" stroke="#12c191" stroke-width="1.1"/></svg>
<svg style="left:43px;top:644px" width="643" height="41"><rect x="0" y="0.20" width="643" height="38.80" fill="#e9edeb"/></svg>
<div class="a" style="left:47.9px;top:650.3px;font-size:10.20px;color:#1c4877;letter-spacing:0.06px;font-weight:bold;">Conta Referencial:</div>
<div class="a" style="left:604.2px;top:650.3px;font-size:10.20px;color:#1c4877;letter-spacing:0.17px;font-weight:bold;">Sint/Analíti:</div>
<div class="a" style="left:47.9px;top:667.4px;font-size:10.20px;color:#2f5e8e;letter-spacing:-1.06px;">1.01.01.04.01</div>
<div class="a" style="left:101.6px;top:667.4px;font-size:10.20px;color:#2f5e8e;letter-spacing:0.30px;">- Numerários em Trânsito</div>
<div class="a" style="left:604.2px;top:667.4px;font-size:10.20px;color:#2f5e8e;">A</div>
</div>
  <div id="sb">
<svg style="left:0;top:0" width="15" height="720" viewBox="1107 127 15 720"><path d="M1110 142.100 L1114.500 137 L1119 142.100 Z" fill="#a0a0a0"/><rect x="1110" y="150" width="9" height="18.200" rx="4.500" fill="#9f9f9f"/><path d="M1110 831.800 L1119 831.800 L1114.500 836.900 Z" fill="#a0a0a0"/></svg>
</div>
</div>

<!-- ============ RIGHT PANEL ============ -->
<div id="rp">
<div class="a" style="left:1px;top:253px;width:393px;height:186px;background:#ebebeb;border:3px solid #ff0000;border-radius:1px;box-shadow:inset 0 0 0 1px #eef6f6"></div>
<svg style="left:0;top:0" width="395" height="720" viewBox="1137 127 395 720" fill="none" stroke-linecap="round" stroke-linejoin="round">
<rect x="1152.7" y="141.8" width="35.6" height="35.6" rx="8.5" fill="#fff" stroke="#ccd4dd" stroke-width="1"/>
<path d="M1178 160 H1164.6 M1169.9 154.5 L1164.4 160 L1169.9 165.5" stroke="#5a5a5a" stroke-width="1.9"/>
<rect x="1352.7" y="141.5" width="16.5" height="16.5" rx="3" fill="#fff" stroke="#8f8f8f" stroke-width="1"/>
<rect x="1352.7" y="162.7" width="16.5" height="16.5" rx="3" fill="#fff" stroke="#8f8f8f" stroke-width="1"/>
<rect x="1152.7" y="200.2" width="363.8" height="35.2" rx="8.5" fill="#fff" stroke="#c6cdd7" stroke-width="1"/>
<rect x="1160" y="198" width="111" height="5" fill="#fff" stroke="none"/>
<circle cx="1500.1" cy="216.2" r="5.4" stroke="#555" stroke-width="1.3"/><path d="M1504 220.2 L1507.6 223.5" stroke="#555" stroke-width="1.3"/>
<path d="M1137 247.6 H1532" stroke="#e4e7eb" stroke-width="1"/>
<path d="M1159.2 351.3 C1162 345.90000000000003 1165.2 345.3 1168 345.3 S1174 345.90000000000003 1176.8 351.3 C1174 356.7 1170.8 357.3 1168 357.3 S1162 356.7 1159.2 351.3 Z" stroke="#1dbf92" stroke-width="1.5"/><circle cx="1168" cy="351.3" r="2.4" stroke="#1dbf92" stroke-width="1.5"/>
<rect x="1197.3" y="343.3" width="17.3" height="16" fill="#f0f0f0" stroke="none"/>
<path d="M1235.9 343.3 L1247.6 341.3 V361.3 L1235.9 359.3 Z M1247.6 343.90000000000003 H1252.2 V358.7 H1247.6" stroke="#eeeeee" stroke-width="1.3"/><path d="M1239.3 348.1 L1244.3 354.5 M1244.3 348.1 L1239.3 354.5" stroke="#eeeeee" stroke-width="1.3"/>
<path d="M1272 345.1 a3 3 0 0 1 3 -3 h3.6 l2.6 1.6 h7.6 a3 3 0 0 1 3 3 v10.5 a3 3 0 0 1 -3 3 h-13.8 a3 3 0 0 1 -3 -3 Z M1272 347.7 H1291.8" stroke="#eeeeee" stroke-width="1.4"/>
<rect x="1310.8" y="342.3" width="20" height="18" rx="3.5" stroke="#eeeeee" stroke-width="1.4"/><path d="M1311.8 344.1 L1319.3 352.1 Q1320.8 353.3 1322.3 352.1 L1329.8 344.1" stroke="#eeeeee" stroke-width="1.4"/>
<path d="M1352.2 356.3 A8.4 8.4 0 1 1 1355.2 359.1 L1351 360.2 Z" stroke="#eeeeee" stroke-width="1.4"/><path d="M1356 347.5 q-.9 1.2 .3 3.2 q1.5 2.6 4.2 4 q1.7 .8 2.9 -.6" stroke="#eeeeee" stroke-width="2"/>
<path d="M1159.2 484.9 C1162 479.5 1165.2 478.9 1168 478.9 S1174 479.5 1176.8 484.9 C1174 490.29999999999995 1170.8 490.9 1168 490.9 S1162 490.29999999999995 1159.2 484.9 Z" stroke="#1dbf92" stroke-width="1.5"/><circle cx="1168" cy="484.9" r="2.4" stroke="#1dbf92" stroke-width="1.5"/>
<rect x="1197.3" y="476.9" width="17.3" height="16" fill="#707070" stroke="none"/>
<path d="M1235.9 476.9 L1247.6 474.9 V494.9 L1235.9 492.9 Z M1247.6 477.5 H1252.2 V492.29999999999995 H1247.6" stroke="#6a6a6a" stroke-width="1.3"/><path d="M1239.3 481.7 L1244.3 488.09999999999997 M1244.3 481.7 L1239.3 488.09999999999997" stroke="#6a6a6a" stroke-width="1.3"/>
<path d="M1272 478.7 a3 3 0 0 1 3 -3 h3.6 l2.6 1.6 h7.6 a3 3 0 0 1 3 3 v10.5 a3 3 0 0 1 -3 3 h-13.8 a3 3 0 0 1 -3 -3 Z M1272 481.29999999999995 H1291.8" stroke="#6a6a6a" stroke-width="1.4"/>
<rect x="1310.8" y="475.9" width="20" height="18" rx="3.5" stroke="#6a6a6a" stroke-width="1.4"/><path d="M1311.8 477.7 L1319.3 485.7 Q1320.8 486.9 1322.3 485.7 L1329.8 477.7" stroke="#6a6a6a" stroke-width="1.4"/>
<path d="M1352.2 489.9 A8.4 8.4 0 1 1 1355.2 492.7 L1351 493.79999999999995 Z" stroke="#6a6a6a" stroke-width="1.4"/><path d="M1356 481.09999999999997 q-.9 1.2 .3 3.2 q1.5 2.6 4.2 4 q1.7 .8 2.9 -.6" stroke="#6a6a6a" stroke-width="2"/>
<rect x="1152.7" y="515" width="356.6" height="35.2" rx="8.5" fill="#fff" stroke="#cfd4db" stroke-width="1"/>
<rect x="1160" y="512.5" width="198" height="6" fill="#ebebeb" stroke="none"/>
<rect x="1160" y="515.5" width="198" height="4" fill="#fff" stroke="none"/>
<path d="M1486.6 529.2 L1492.6 535.6 L1498.6 529.2" stroke="#555" stroke-width="1.7"/>
</svg>
<div class="a" style="left:241.5px;top:14.2px;font-size:15px;color:#15233b;letter-spacing:0.64px;">Data/Hora</div>
<div class="a" style="left:241.5px;top:35.4px;font-size:15px;color:#15233b;letter-spacing:0.15px;">Dados do Escritório</div>
<div class="a" style="left:26.6px;top:65.9px;font-size:12.6px;color:#8c8c8c;letter-spacing:0.29px;font-weight:bold;">Filtrar Relatórios</div>
<div class="a" style="left:26.9px;top:83.8px;font-size:13.2px;color:#b8b8b8;letter-spacing:0.3px;">Digite o nome do relatório</div>
<div class="a" style="left:15.3px;top:139.5px;font-size:16.6px;color:#10213a;letter-spacing:1.1px;-webkit-text-stroke:.25px #10213a;">Cadastro do Plano de Contas Referencial</div>
<div class="a" style="left:15.3px;top:163px;font-size:14.6px;color:#1b2a42;letter-spacing:0.53px;">É o padrão a ser seguido para informar os saldos</div>
<div class="a" style="left:15.3px;top:183.9px;font-size:14.6px;color:#1b2a42;letter-spacing:0.46px;">contábeis com base na ECF</div>
<div class="a" style="left:15.3px;top:273.5px;font-size:16.65px;color:#10213a;letter-spacing:1.2px;-webkit-text-stroke:.25px #10213a;">Confronto com Plano de Contas</div>
<div class="a" style="left:15.3px;top:296.7px;font-size:14.6px;color:#1b2a42;letter-spacing:0.54px;">Confronto entre as contas do Plano de Contas</div>
<div class="a" style="left:15.3px;top:317.6px;font-size:14.6px;color:#1b2a42;letter-spacing:0.49px;">Referencial, com o Plano de Contas do Contador</div>
<div class="a" style="left:26.1px;top:380.5px;font-size:12.6px;color:#8c8c8c;letter-spacing:0.58px;font-weight:bold;">Contas a serem confrontadas</div>
<div class="a" style="left:23.3px;top:400.4px;font-size:13px;color:#1b2a42;letter-spacing:0.15px;">Sem Vínculo</div>
<div class="a" style="left:60.299999999999955px;top:218.1px;width:17.3px;text-align:center;font-size:12.5px;font-weight:bold;color:#fff">W</div>
<div class="a" style="left:60.299999999999955px;top:351.7px;width:17.3px;text-align:center;font-size:12.5px;font-weight:bold;color:#fff">W</div>
</div>

<div id="tc1" class="a" style="left:1540px;top:0;width:1px;height:2px;background:#62c6c9;border-radius:0 0 0 2px"></div>
<div id="tc2" class="a" style="left:1540px;top:901px;width:1px;height:4px;background:#62c6c9;border-radius:2px 0 0 0"></div>

<!-- ============ CHAT AVATAR ============ -->
<div id="chat">
<svg style="left:1480px;top:850px" width="61" height="55" viewBox="1480 850 61 55">
<defs><clipPath id="cc"><path d="M1487 898 V878 A19.5 20 0 1 1 1506.5 898 Z"/></clipPath></defs>
<path d="M1486.1 899 V878 A20.4 21 0 1 1 1506.5 899 Z" fill="#c6e4fb" stroke="#1a78ee" stroke-width="2.1" stroke-linejoin="miter"/>
<g clip-path="url(#cc)">
<path d="M1490.5 899 C1489 885 1490 868 1496 861.5 C1500 857.5 1509 857 1513.5 860.5 C1520 866 1522.5 880 1521 893 L1516 899 Z" fill="#4a3430"/>
<path d="M1497.5 884 h13 v10 h-13z" fill="#dba995"/>
<ellipse cx="1504.6" cy="874" rx="10" ry="13" fill="#e4b8a3"/>
<path d="M1494 866 C1496 859.5 1503 858.5 1507 859.5 C1512 860.5 1514.5 864 1515 868 C1511 865.5 1506 862.5 1503.5 862 C1499.5 862.5 1496 864 1494 866 Z" fill="#4a3430"/>
<path d="M1488 899 C1489 893.5 1494 891.5 1500 890.5 L1504.5 896 L1510 890.5 C1514 891 1518 892.5 1519.5 895 L1517 899 Z" fill="#e9e5e3"/>
<rect x="1494.6" y="867.8" width="8.4" height="6.8" rx="2.6" fill="rgba(120,125,140,.12)" stroke="#4d5058" stroke-width="1.1"/>
<rect x="1505.4" y="867" width="8.4" height="6.8" rx="2.6" fill="rgba(120,125,140,.12)" stroke="#4d5058" stroke-width="1.1"/>
<path d="M1503 870.5 q1.2 -.8 2.4 -.4" stroke="#4d5058" stroke-width="1" fill="none"/>
<path d="M1501 878.8 q4.5 1 9 -.8 q-1.5 4 -5 4 q-3 0 -4 -3.2z" fill="#c4423f"/>
<path d="M1502 879.1 q3.8 .7 7 -.6 q-.6 1.4 -3.4 1.8 q-2.6 .2 -3.6 -1.2z" fill="#f6f1ee"/>
</g>
</svg>
</div>

</body>
</html>
